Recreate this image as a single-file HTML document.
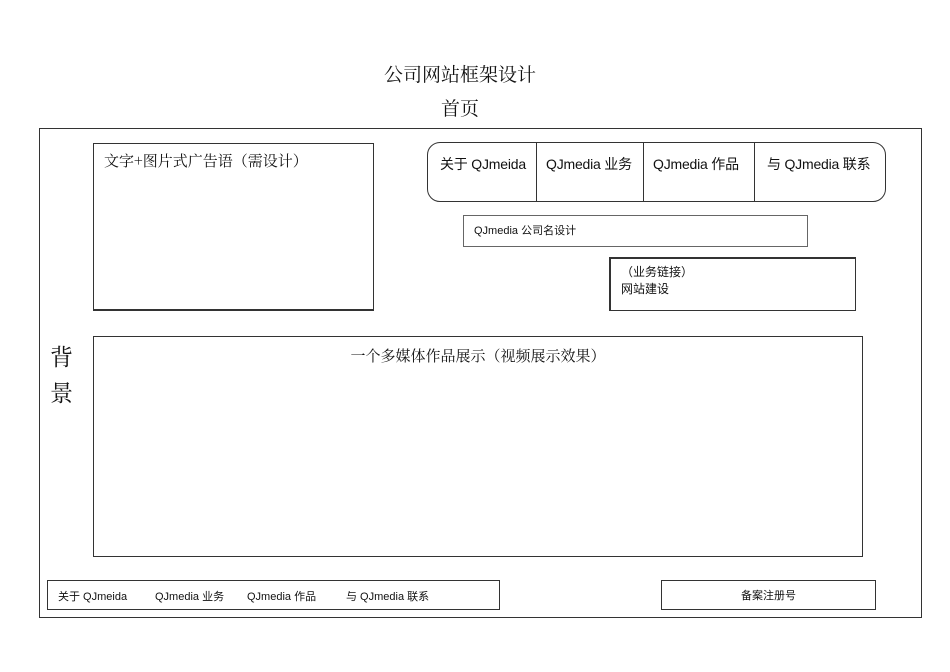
<html><head><style>
body{margin:0;width:950px;height:672px;background:#fff;position:relative;font-family:"Liberation Sans","Noto Sans CJK SC",sans-serif;color:#111;overflow:hidden}
div{position:absolute;box-sizing:border-box}
.b{border:1px solid #333}
</style></head><body>
<div style="left:360px;top:60px;width:200px;text-align:center;font-size:19px;font-family:'Noto Serif CJK SC',serif">公司网站框架设计</div>
<div style="left:360px;top:94px;width:200px;text-align:center;font-size:19px;font-family:'Noto Serif CJK SC',serif">首页</div>
<div class="b" style="left:39px;top:128px;width:883px;height:490px"></div>
<div class="b" style="left:93px;top:143px;width:281px;height:168px;border-bottom-width:2px;padding:6px 0 0 10px;font-size:15px;font-family:'Noto Serif CJK SC',serif">文字+图片式广告语（需设计）</div>
<div class="b" style="left:427px;top:142px;width:459px;height:60px;border-radius:13px"></div>
<div style="left:536px;top:143px;width:1px;height:58px;background:#333"></div>
<div style="left:643px;top:143px;width:1px;height:58px;background:#333"></div>
<div style="left:754px;top:143px;width:1px;height:58px;background:#333"></div>
<div style="left:440px;top:154px;font-size:14px;letter-spacing:-0.2px">关于 QJmeida</div>
<div style="left:546px;top:154px;font-size:14px;letter-spacing:-0.2px">QJmedia 业务</div>
<div style="left:653px;top:154px;font-size:14px;letter-spacing:-0.2px">QJmedia 作品</div>
<div style="left:767px;top:154px;font-size:14px;letter-spacing:-0.2px">与 QJmedia 联系</div>
<div class="b" style="left:463px;top:215px;width:345px;height:32px;border-color:#666;padding:6px 0 0 10px;font-size:11px">QJmedia 公司名设计</div>
<div class="b" style="left:609px;top:257px;width:247px;height:54px;border-width:2px 1px 1px 2px;padding:5px 0 0 10px;font-size:12px;line-height:17px">（业务链接）<br>网站建设</div>
<div style="left:50px;top:338px;font-size:23px;line-height:36px;font-family:'Noto Serif CJK SC',serif">背<br>景</div>
<div class="b" style="left:93px;top:336px;width:770px;height:221px;text-align:center;padding-top:8px;font-size:15px;font-family:'Noto Serif CJK SC',serif">一个多媒体作品展示（视频展示效果）</div>
<div class="b" style="left:47px;top:580px;width:453px;height:30px;font-size:11px">
<div style="left:10px;top:7px">关于 QJmeida</div>
<div style="left:107px;top:7px">QJmedia 业务</div>
<div style="left:199px;top:7px">QJmedia 作品</div>
<div style="left:298px;top:7px">与 QJmedia 联系</div></div>
<div class="b" style="left:661px;top:580px;width:215px;height:30px;text-align:center;padding-top:6px;font-size:11px">备案注册号</div>
</body></html>
